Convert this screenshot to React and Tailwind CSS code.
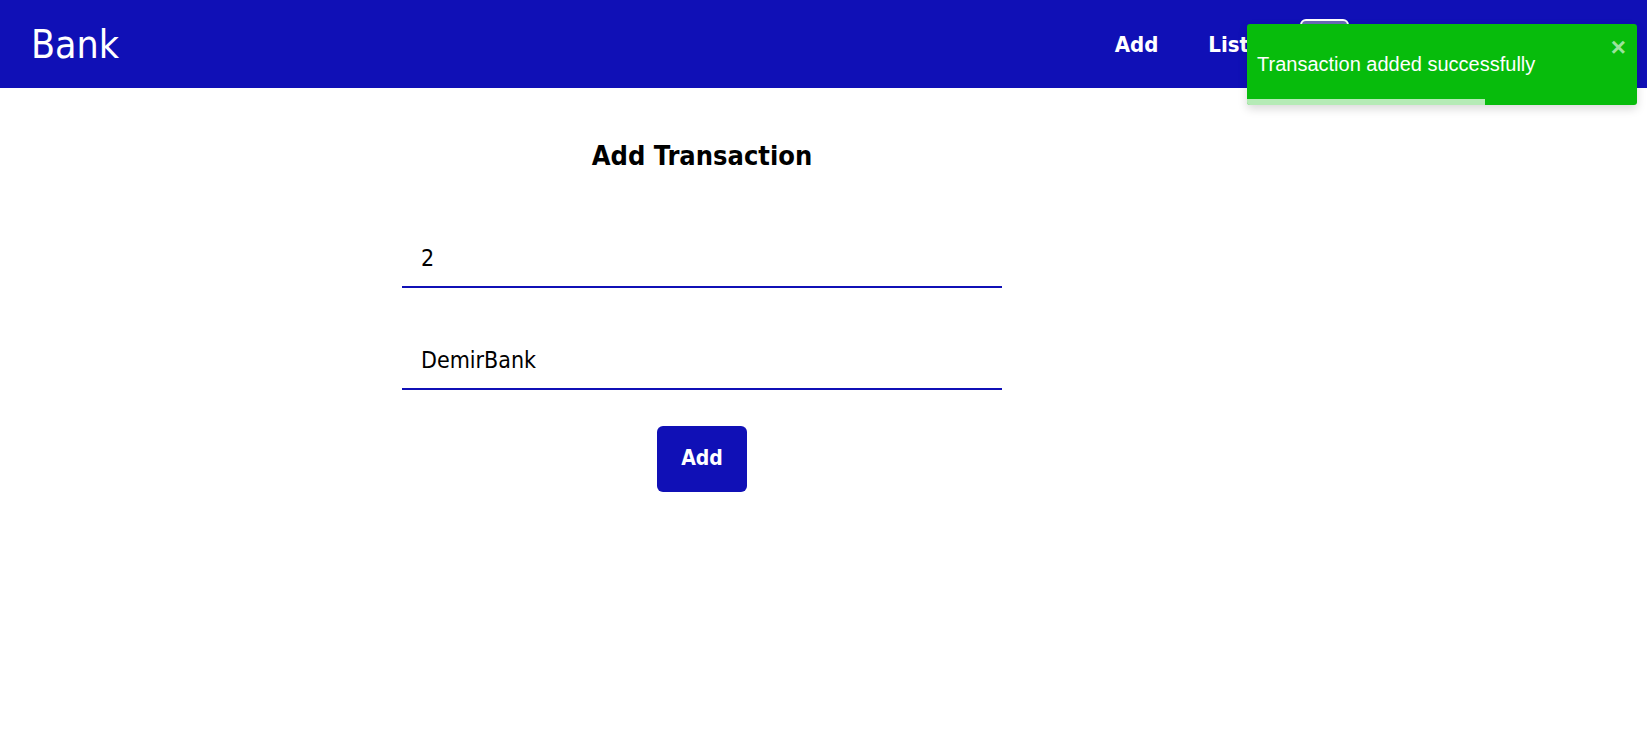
import React, { useState } from 'react';

const App = () => {
  const [amount, setAmount] = useState('2');
  const [bank, setBank] = useState('DemirBank');

  return (
    <div className="relative min-h-[731px] bg-white font-['DejaVu_Sans_Condensed','DejaVu_Sans',sans-serif]">
      {/* Navbar */}
      <nav className="flex h-[88px] items-center bg-[#1010b6] pl-[31px] pr-[298px]">
        <span className="text-[39px] font-normal leading-none text-white">Bank</span>
        <div className="ml-auto flex h-full items-center">
          <a className="text-[22px] font-bold text-white">Add</a>
          <a className="ml-[50px] text-[22px] font-bold text-white">List</a>
          <div className="mb-auto ml-[51px] mt-[19px] h-[50px] w-[49px] rounded-[6px] border-2 border-white bg-[#6a6ab8]" />
        </div>
      </nav>

      {/* Form */}
      <div className="ml-[402px] w-[600px] pt-[48px]">
        <h2 className="text-center text-[27px] font-semibold leading-[40px] text-black">Add Transaction</h2>
        <div className="mt-[59px]">
          <input
            value={amount}
            onChange={(e) => setAmount(e.target.value)}
            className="h-[53px] w-full border-b-2 border-[#1010b6] bg-transparent px-[19px] pb-[6px] text-[23px] text-black outline-none"
          />
        </div>
        <div className="mt-[49px]">
          <input
            value={bank}
            onChange={(e) => setBank(e.target.value)}
            className="h-[53px] w-full border-b-2 border-[#1010b6] bg-transparent px-[19px] pb-[6px] text-[23px] text-black outline-none"
          />
        </div>
        <div className="mt-[36px] flex justify-center">
          <button className="h-[66px] w-[90px] rounded-[6px] bg-[#1010b6] text-[21px] font-bold text-white">Add</button>
        </div>
      </div>

      {/* Toast */}
      <div className="absolute right-[10px] top-[24px] h-[81px] w-[390px] overflow-hidden rounded-[3px] bg-[#07bc0c] shadow-[0_4px_10px_rgba(0,0,0,0.15)] font-['Liberation_Sans',Arial,sans-serif]">
        <div className="flex h-[76px] items-center pl-[10px] pt-[4px] text-[20px] text-white">Transaction added successfully</div>
        <button className="absolute right-[11px] top-[10px] text-[26px] font-bold leading-none text-white/60">×</button>
        <div className="absolute bottom-0 left-0 h-[6px] w-[238px] bg-white/70" />
      </div>
    </div>
  );
};

export default App;
